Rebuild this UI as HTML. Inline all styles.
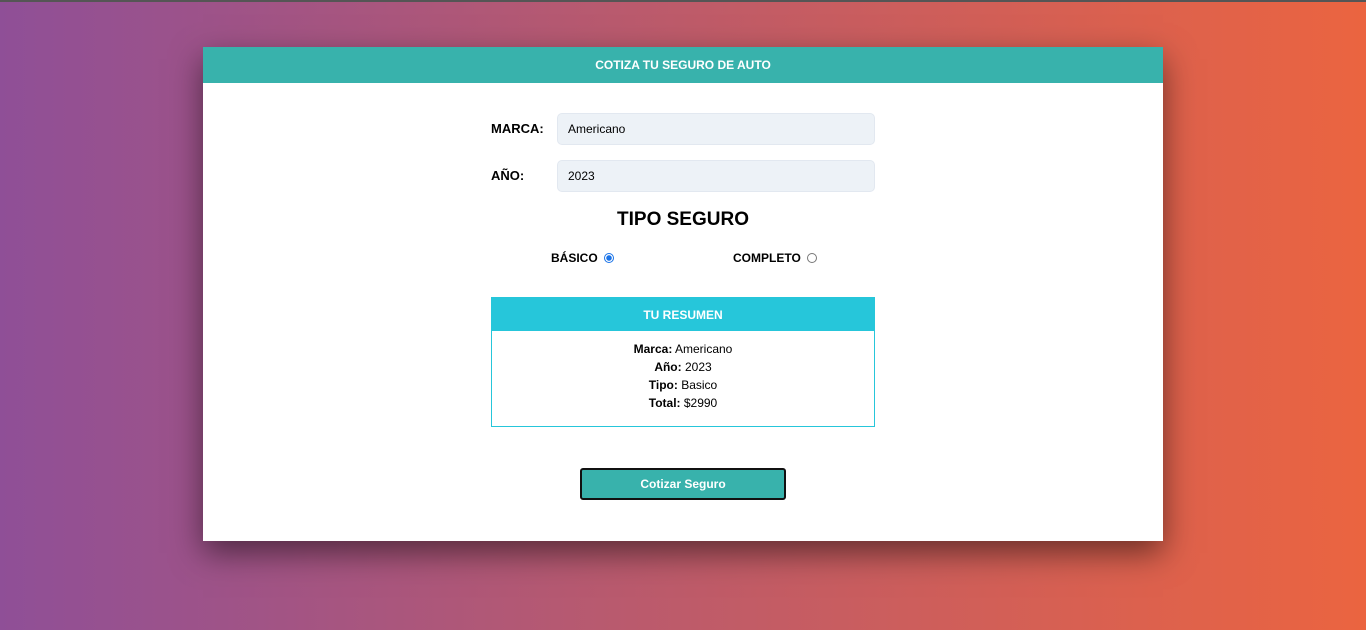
<!DOCTYPE html>
<html><head><meta charset="utf-8"><style>
*{box-sizing:border-box;margin:0;padding:0}
body{width:1366px;height:630px;overflow:hidden;background:linear-gradient(90deg,#8f4f97,#b95a6e 45%,#eb6440);font-family:"Liberation Sans",sans-serif;font-size:13px;color:#000;position:relative}
.topl{position:absolute;left:0;top:0;width:1366px;height:2px;background:#555}
.card{position:absolute;left:203px;top:47px;width:960px;height:494px;background:#fff;box-shadow:0 12px 30px rgba(0,0,0,.5)}
.hd{height:36px;background:#38b2ac;color:#fff;font-weight:bold;font-size:12px;text-align:center;line-height:36px}
.row{position:absolute;left:288px;width:384px;height:32px}
.row label{position:absolute;left:0;top:0;line-height:32px;font-weight:bold;font-size:13px}
.row .in{position:absolute;left:66px;top:0;width:318px;height:32px;background:#edf2f7;border:1px solid #e2e8f0;border-radius:5px;line-height:30px;padding-left:10px;font-size:12px}
h2{position:absolute;left:0;width:960px;top:162px;text-align:center;font-size:19px}
.r{position:absolute;top:203px;font-weight:bold;font-size:12px;line-height:16px}
.rad{display:inline-block;width:10px;height:10px;border-radius:50%;border:1px solid #777;vertical-align:-1px;margin-left:6px}
.rad.on{border:1px solid #1a73e8;background:radial-gradient(#1a73e8 2.5px,#fff 3px)}
.sum{position:absolute;left:288px;top:250px;width:384px;height:130px;border:1px solid #26c6da}
.sh{height:33px;background:#26c6da;color:#fff;font-weight:bold;font-size:12px;text-align:center;line-height:34px}
.sb{text-align:center;font-size:12px;line-height:18px;padding-top:9px}
.btn{position:absolute;left:377px;top:421px;width:206px;height:32px;background:#38b2ac;border:2px solid #111;border-radius:3px;color:#fff;font-weight:bold;font-size:12px;text-align:center;line-height:28px}
</style></head><body>
<div class="topl"></div>
<div class="card">
<div class="hd">COTIZA TU SEGURO DE AUTO</div>
<div class="row" style="top:66px"><label>MARCA:</label><div class="in">Americano</div></div>
<div class="row" style="top:113px"><label>AÑO:</label><div class="in">2023</div></div>
<h2>TIPO SEGURO</h2>
<div class="r" style="left:348px">BÁSICO<span class="rad on"></span></div>
<div class="r" style="left:530px">COMPLETO<span class="rad"></span></div>
<div class="sum"><div class="sh">TU RESUMEN</div><div class="sb"><b>Marca:</b> Americano<br><b>Año:</b> 2023<br><b>Tipo:</b> Basico<br><b>Total:</b> $2990</div></div>
<div class="btn">Cotizar Seguro</div>
</div>
</body></html>
